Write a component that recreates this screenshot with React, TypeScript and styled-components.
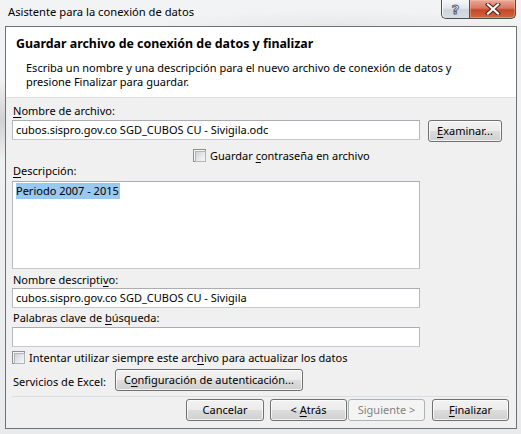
import React from "react";
import styled, { createGlobalStyle } from "styled-components";

const Global = createGlobalStyle`
  html, body { margin: 0; padding: 0; width: 521px; height: 434px; overflow: hidden; }
  body { font-family: "Noto Sans", "Segoe UI", sans-serif; font-size: 11px; color: #000; }
  * { box-sizing: border-box; }
`;

const Frame = styled.div`
  width: 521px;
  height: 434px;
  display: flex;
  flex-direction: column;
  padding: 0 4px 5px 5px;
  background:
    radial-gradient(ellipse 60px 40px at 0px 120px, rgba(150,150,150,0.35), transparent),
    radial-gradient(ellipse 200px 20px at 340px 30px, rgba(190,190,190,0.25), transparent),
    linear-gradient(180deg, #f2f3f4 0%, #e9eaeb 100%);
`;

const TitleBar = styled.div`
  height: 26px;
  display: flex;
  align-items: flex-start;
  justify-content: space-between;
  margin-left: -5px;
  margin-right: -4px;
`;

const TitleText = styled.div`
  padding: 4px 0 0 8px;
  font-size: 11.2px;
  line-height: 16px;
  color: #000;
`;

const Caption = styled.div`
  display: flex;
  margin-right: 5px;
`;

const CapButton = styled.div<{ $kind: "help" | "close" }>`
  height: 19px;
  width: ${(p) => (p.$kind === "help" ? 28 : 47)}px;
  border: 1px solid #4b4f55;
  border-top: none;
  display: flex;
  align-items: center;
  justify-content: center;
  ${(p) =>
    p.$kind === "help"
      ? `border-radius: 0 0 0 5px; border-right: none;
         background: linear-gradient(180deg, #f6f7f8 0%, #e3e6ea 45%, #cfd4da 55%, #d8dde2 100%);
         box-shadow: inset 1px 0 0 rgba(255,255,255,0.8);`
      : `border-radius: 0 0 5px 0;
         background: linear-gradient(180deg, #e9a99a 0%, #d9775f 45%, #c3472a 55%, #d2673f 100%);
         box-shadow: inset 0 0 0 1px rgba(255,200,180,0.4);`}
`;

const HelpGlyph = styled.span`
  font-family: "DejaVu Sans", sans-serif;
  font-weight: bold;
  font-size: 13px;
  line-height: 13px;
  color: #f3f4f5;
  -webkit-text-stroke: 1px #59606a;
`;

const Client = styled.div`
  flex: 1;
  border: 1px solid #6f7275;
  background: #f0f0f0;
  display: flex;
  flex-direction: column;
`;

const Header = styled.div`
  height: 71px;
  background: #fff;
  border-bottom: 1px solid #dfdfdf;
  padding: 9px 0 0 10px;
`;

const HeaderTitle = styled.div`
  font-weight: bold;
  font-size: 12.4px;
  line-height: 16px;
`;

const HeaderDesc = styled.div`
  margin-top: 9px;
  padding-left: 10px;
  width: 440px;
  line-height: 14px;
`;

const Body = styled.div`
  flex: 1;
  padding: 5px 7px 0 6px;
  display: flex;
  flex-direction: column;
`;

const Label = styled.div<{ $mt?: number }>`
  margin-top: ${(p) => p.$mt ?? 0}px;
  padding-left: 1px;
  line-height: 15px;
  height: 15px;
  white-space: nowrap;
`;

const U = styled.span`
  text-decoration: underline;
  text-underline-offset: 2px;
`;

const InputRow = styled.div<{ $mt?: number }>`
  margin-top: ${(p) => p.$mt ?? 0}px;
  display: flex;
  align-items: flex-start;
  gap: 8px;
`;

const TextBox = styled.div<{ $h?: number; $mt?: number }>`
  width: 408px;
  height: ${(p) => p.$h ?? 20}px;
  margin-top: ${(p) => p.$mt ?? 0}px;
  background: #fff;
  border: 1px solid #abadb3;
  border-left-color: #b6b8be;
  border-right-color: #b6b8be;
  border-bottom-color: #c6c9cf;
  padding: 1px 0 0 3px;
  line-height: 16px;
  white-space: nowrap;
  overflow: hidden;
`;

const Selected = styled.span`
  background: #99c9ef;
  padding: 0 1px 1px 0;
`;

const Button = styled.div<{ $w: number; $disabled?: boolean; $h?: number }>`
  width: ${(p) => p.$w}px;
  height: ${(p) => p.$h ?? 22}px;
  flex: none;
  border: 1px solid ${(p) => (p.$disabled ? "#adb2b5" : "#707070")};
  border-radius: 3px;
  display: flex;
  align-items: center;
  justify-content: center;
  padding-bottom: 1px;
  color: ${(p) => (p.$disabled ? "#838383" : "#000")};
  white-space: pre;
  background: ${(p) =>
    p.$disabled
      ? "#f4f4f4"
      : "linear-gradient(180deg, #f2f2f2 0%, #ebebeb 50%, #dddddd 51%, #cfcfcf 100%)"};
  box-shadow: inset 0 0 0 1px ${(p) => (p.$disabled ? "#f4f4f4" : "rgba(255,255,255,0.75)")};
`;

const CheckRow = styled.div<{ $mt?: number; $pl?: number }>`
  margin-top: ${(p) => p.$mt ?? 0}px;
  padding-left: ${(p) => p.$pl ?? 0}px;
  height: 13px;
  display: flex;
  align-items: center;
  gap: 4px;
  line-height: 15px;
  white-space: nowrap;
`;

const Check = styled.span`
  width: 13px;
  height: 13px;
  flex: none;
  border: 1px solid #8e8f8f;
  background: #f4f4f4;
  position: relative;
  &::after {
    content: "";
    position: absolute;
    left: 1px;
    top: 1px;
    width: 9px;
    height: 9px;
    border: 1px solid #b1b6bc;
    background: linear-gradient(135deg, #cfd2d6 0%, #e9eaec 60%, #f7f7f7 100%);
  }
`;

const ServRow = styled.div`
  margin-top: 5px;
  display: flex;
  align-items: center;
  gap: 9px;
`;

const ServLabel = styled.span`
  padding-left: 1px;
  padding-top: 3px;
`;

const Separator = styled.div`
  margin-top: 5px;
  height: 1px;
  background: #d5dfe5;
`;

const Footer = styled.div`
  margin-top: 2px;
  display: flex;
  justify-content: flex-end;
`;

const FootButton = styled(Button)<{ $ml?: number }>`
  margin-left: ${(p) => p.$ml ?? 0}px;
`;

export default function App() {
  return (
    <>
      <Global />
      <Frame>
        <TitleBar>
          <TitleText>Asistente para la conexión de datos</TitleText>
          <Caption>
            <CapButton $kind="help">
              <HelpGlyph>?</HelpGlyph>
            </CapButton>
            <CapButton $kind="close">
              <svg width="16" height="12" viewBox="0 0 16 12">
                <path d="M3 1.5 L13 10.5 M13 1.5 L3 10.5" stroke="#5a2014" strokeWidth="4.2" strokeLinecap="square" />
                <path d="M3 1.5 L13 10.5 M13 1.5 L3 10.5" stroke="#ffffff" strokeWidth="2.2" strokeLinecap="square" />
              </svg>
            </CapButton>
          </Caption>
        </TitleBar>
        <Client>
          <Header>
            <HeaderTitle>Guardar archivo de conexión de datos y finalizar</HeaderTitle>
            <HeaderDesc>
              Escriba un nombre y una descripción para el nuevo archivo de conexión de datos y presione Finalizar para guardar.
            </HeaderDesc>
          </Header>
          <Body>
            <Label>
              <U>N</U>ombre de archivo:
            </Label>
            <InputRow $mt={2}>
              <TextBox>cubos.sispro.gov.co SGD_CUBOS CU - Sivigila.odc</TextBox>
              <Button $w={74}>
                <U>E</U>xaminar...
              </Button>
            </InputRow>
            <CheckRow $mt={7} $pl={181}>
              <Check />
              <span>
                Guardar <U>c</U>ontraseña en archivo
              </span>
            </CheckRow>
            <Label $mt={1}>
              <U>D</U>escripción:
            </Label>
            <TextBox $h={88} $mt={3}>
              <Selected>Periodo 2007 - 2015</Selected>
            </TextBox>
            <Label $mt={3}>
              Nombre descripti<U>v</U>o:
            </Label>
            <TextBox $mt={1}>cubos.sispro.gov.co SGD_CUBOS CU - Sivigila</TextBox>
            <Label $mt={2}>
              Palabras clave de <U>b</U>úsqueda:
            </Label>
            <TextBox $mt={2} />
            <CheckRow $mt={4}>
              <Check />
              <span>
                Intentar utilizar siempre este arc<U>h</U>ivo para actualizar los datos
              </span>
            </CheckRow>
            <ServRow>
              <ServLabel>Servicios de Excel:</ServLabel>
              <Button $w={188}>
                C<U>o</U>nfiguración de autenticación...
              </Button>
            </ServRow>
            <Separator />
            <Footer>
              <FootButton $w={78}>Cancelar</FootButton>
              <FootButton $w={77} $ml={6}>
                {"< "}
                <U>A</U>trás
              </FootButton>
              <FootButton $w={77} $ml={1} $disabled>
                Siguiente &gt;
              </FootButton>
              <FootButton $w={77} $ml={7}>
                <U>F</U>inalizar
              </FootButton>
            </Footer>
          </Body>
        </Client>
      </Frame>
    </>
  );
}
